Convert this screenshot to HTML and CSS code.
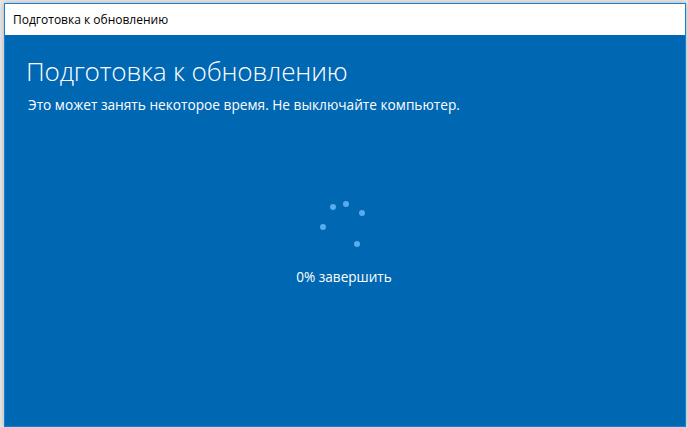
FILE: index.html
```html
<!DOCTYPE html>
<html lang="ru">
<head>
  <meta charset="UTF-8" />
  <title>Подготовка к обновлению</title>
  <link rel="stylesheet" href="styles.css">
</head>
<body>
  <div class="window">
    <div class="titlebar">Подготовка к обновлению</div>
    <main class="content">
      <h1>Подготовка к обновлению</h1>
      <p class="note">Это может занять некоторое время. Не выключайте компьютер.</p>
      <div class="progress">
        <svg class="spinner" width="60" height="56" viewBox="0 0 60 56">
          <circle cx="13" cy="7" r="3"/>
          <circle cx="26" cy="4" r="3"/>
          <circle cx="42" cy="13" r="3"/>
          <circle cx="3" cy="27" r="3"/>
          <circle cx="37" cy="44" r="3"/>
        </svg>
        <div class="percent">0% завершить</div>
      </div>
    </main>
  </div>
</body>
</html>
```

FILE: styles.css
```css
body {
  margin: 0;
  background: #e8e8e8;
  font-family: "Open Sans", "Noto Sans", sans-serif;
  width: 688px;
  height: 427px;
  overflow: hidden;
}

.window {
  margin: 3px 0 0 4px;
  width: 680px;
  height: 422px;
  border: 1px solid #1a7fd4;
  background: #0067b3;
  display: flex;
  flex-direction: column;
  box-shadow: 0 0 6px rgba(0, 0, 0, 0.25);
}

.titlebar {
  height: 31px;
  background: #fff;
  color: #000;
  font-size: 12px;
  line-height: 31px;
  padding-left: 8px;
  flex-shrink: 0;
}

.content {
  flex: 1;
  color: #fff;
  padding: 0 0 0 23px;
}

h1 {
  margin: 18px 0 0 -2px;
  font-size: 26.2px;
  font-weight: 300;
  line-height: 36px;
  letter-spacing: -0.2px;
}

.note {
  margin: 7px 0 0;
  font-size: 13.7px;
  line-height: 18px;
}

.progress {
  margin: 86px 0 0 -23px;
  display: flex;
  flex-direction: column;
  align-items: center;
}

.spinner {
  fill: #5aabed;
  margin-left: 10px;
}

.percent {
  margin-top: 12px;
  font-size: 13.6px;
  line-height: 18px;
  padding-right: 2px;
}
```
